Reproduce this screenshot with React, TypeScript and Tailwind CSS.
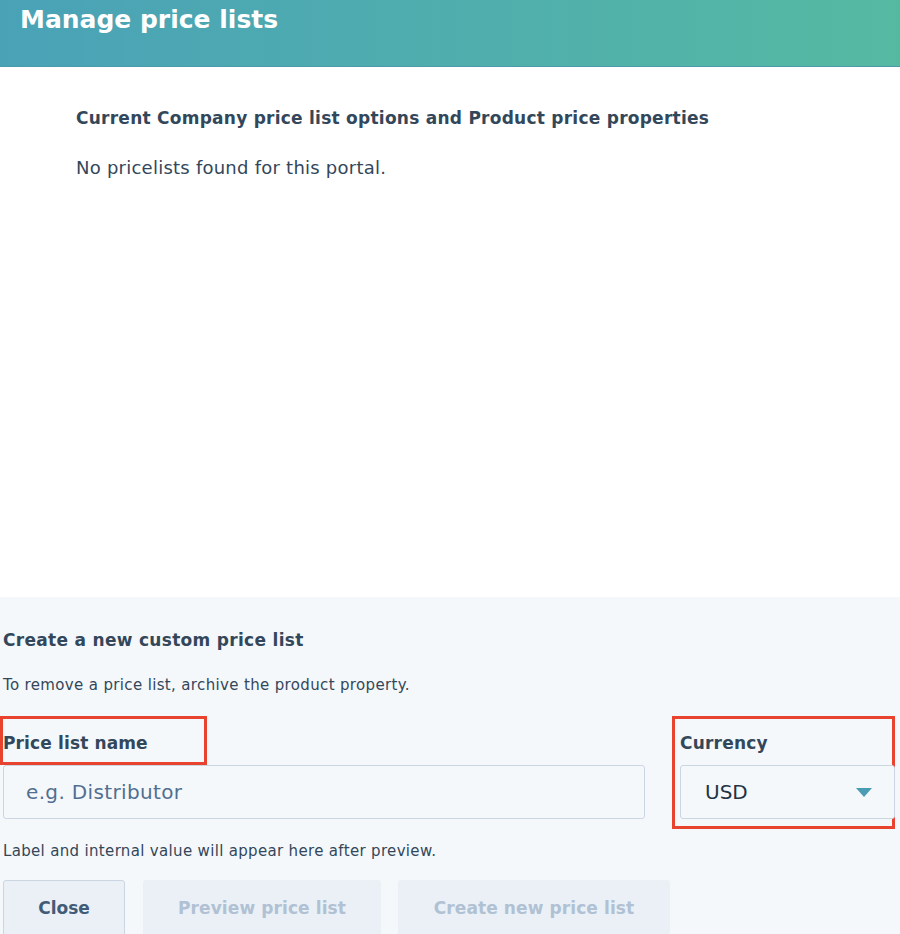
const font = { fontFamily: "'DejaVu Sans', 'Liberation Sans', sans-serif" };

function Caret() {
  return (
    <svg width="16" height="9" viewBox="0 0 16 9" className="shrink-0">
      <path d="M0 0 L16 0 L8 9 Z" fill="#4a9cb3" />
    </svg>
  );
}

export default function App() {
  return (
    <div className="w-[900px] h-[934px] overflow-hidden bg-white text-[#33475b]" style={font}>
      {/* Header */}
      <div className="h-[67px] bg-gradient-to-r from-[#4aa2b7] to-[#55b9a2] border-b border-[#4b9bab] px-5">
        <h1 className="text-[25px] font-bold text-white leading-[40px]">
          Manage price lists
        </h1>
      </div>

      {/* Existing lists */}
      <div className="h-[530px] pl-[76px] pt-[38px]">
        <h2 className="text-[17px] font-bold leading-[26px] tracking-[0.25px]">
          Current Company price list options and Product price properties
        </h2>
        <p className="mt-[24px] text-[18px] leading-[26px] tracking-[0.24px]">No pricelists found for this portal.</p>
      </div>

      {/* Create section */}
      <div className="h-[337px] bg-[#f5f8fa] pt-[30px]">
        <h3 className="pl-[3px] text-[17px] font-bold leading-[26px] tracking-[0.3px]">Create a new custom price list</h3>
        <p className="pl-[3px] mt-[22px] text-[15px] leading-[20px] tracking-[0.35px]">
          To remove a price list, archive the product property.
        </p>

        <div className="mt-[21px] flex items-start">
          <div className="w-[645px]">
            <div className="w-[207px] h-[49px] border-[3px] border-[#e8432e] flex items-center">
              <span className="text-[17px] font-bold leading-[26px] pt-[4px] tracking-[0.13px]">Price list name</span>
            </div>
            <div className="ml-[3px] h-[54px] rounded-[3px] border border-[#cbd6e2] bg-[#f5f8fa] flex items-center px-[22px]">
              <span className="text-[20px] text-[#516f90] tracking-[0.35px]">e.g. Distributor</span>
            </div>
          </div>

          <div className="ml-[27px] w-[223px] h-[113px] border-[3px] border-[#e8432e] pl-[5px] pt-[11px]">
            <div className="text-[17px] font-bold leading-[26px] tracking-[0.2px]">Currency</div>
            <div className="mt-[9px] -mr-[3px] h-[54px] rounded-[3px] border border-[#cbd6e2] bg-[#f5f8fa] flex items-center justify-between pl-[24px] pr-[22px]">
              <span className="text-[20px] text-[#213343]">USD</span>
              <Caret />
            </div>
          </div>
        </div>

        <p className="pl-[3px] mt-[12px] text-[15px] leading-[20px] tracking-[0.33px]">
          Label and internal value will appear here after preview.
        </p>

        <div className="mt-[19px] flex items-start pl-[3px]">
          <button className="w-[122px] h-[58px] rounded-[3px] border border-[#cbd6e2] bg-[#eaf0f6] text-[17px] font-bold text-[#425b76]">
            Close
          </button>
          <button className="ml-[18px] w-[238px] h-[58px] rounded-[3px] bg-[#eaf0f6] text-[17px] font-bold text-[#b0c1d4] tracking-[0.1px]">
            Preview price list
          </button>
          <button className="ml-[17px] w-[272px] h-[58px] rounded-[3px] bg-[#eaf0f6] text-[17px] font-bold text-[#b0c1d4] tracking-[0.1px]">
            Create new price list
          </button>
        </div>
      </div>
    </div>
  );
}
